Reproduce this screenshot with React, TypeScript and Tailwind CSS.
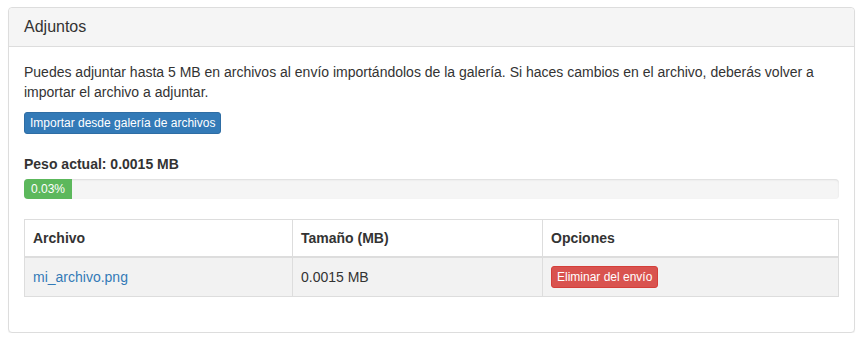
import React from 'react';

const App: React.FC = () => {
  return (
    <div className="px-2 pt-[7px] text-[14px] leading-5 text-[#333]" style={{ fontFamily: '"Liberation Sans", Arial, sans-serif' }}>
      <div className="rounded border border-[#ddd] bg-white shadow-[0_1px_1px_rgba(0,0,0,0.05)]">
        <div className="rounded-t border-b border-[#ddd] bg-[#f5f5f5] px-[15px] py-[10px]">
          <h3 className="text-[16px] leading-[1.1]">Adjuntos</h3>
        </div>
        <div className="p-[15px]">
          <p className="mb-[10px]">
            Puedes adjuntar hasta 5 MB en archivos al envío importándolos de la galería. Si haces cambios en el archivo, deberás volver a
            importar el archivo a adjuntar.
          </p>
          <div className="flex">
            <button className="rounded-[3px] border border-[#2e6da4] bg-[#337ab7] px-[5px] py-px text-[12px] leading-[18px] text-white">
              Importar desde galería de archivos
            </button>
          </div>
          <div className="mt-5">
            <label className="mb-[5px] inline-block font-bold">Peso actual: 0.0015 MB</label>
          </div>
          <div className="mb-5 h-5 overflow-hidden rounded bg-[#f5f5f5] shadow-[inset_0_1px_2px_rgba(0,0,0,0.1)]">
            <div className="h-full bg-[#5cb85c] text-center text-[12px] leading-5 text-white" style={{ width: '48px' }}>
              0.03%
            </div>
          </div>
          <table className="mb-5 w-full border-collapse border border-[#ddd]">
            <thead>
              <tr>
                <th className="w-[268px] border border-b-2 border-[#ddd] p-2 text-left">Archivo</th>
                <th className="w-[250px] border border-b-2 border-[#ddd] p-2 text-left">Tamaño (MB)</th>
                <th className="border border-b-2 border-[#ddd] p-2 text-left">Opciones</th>
              </tr>
            </thead>
            <tbody>
              <tr className="bg-[#f2f2f2]">
                <td className="border border-[#ddd] p-2">
                  <a href="#" className="text-[#337ab7]">mi_archivo.png</a>
                </td>
                <td className="border border-[#ddd] p-2">0.0015 MB</td>
                <td className="border border-[#ddd] p-2">
                  <button className="rounded-[3px] border border-[#d43f3a] bg-[#d9534f] px-[5px] py-px text-[12px] leading-[18px] text-white">
                    Eliminar del envío
                  </button>
                </td>
              </tr>
            </tbody>
          </table>
        </div>
      </div>
    </div>
  );
};

export default App;
